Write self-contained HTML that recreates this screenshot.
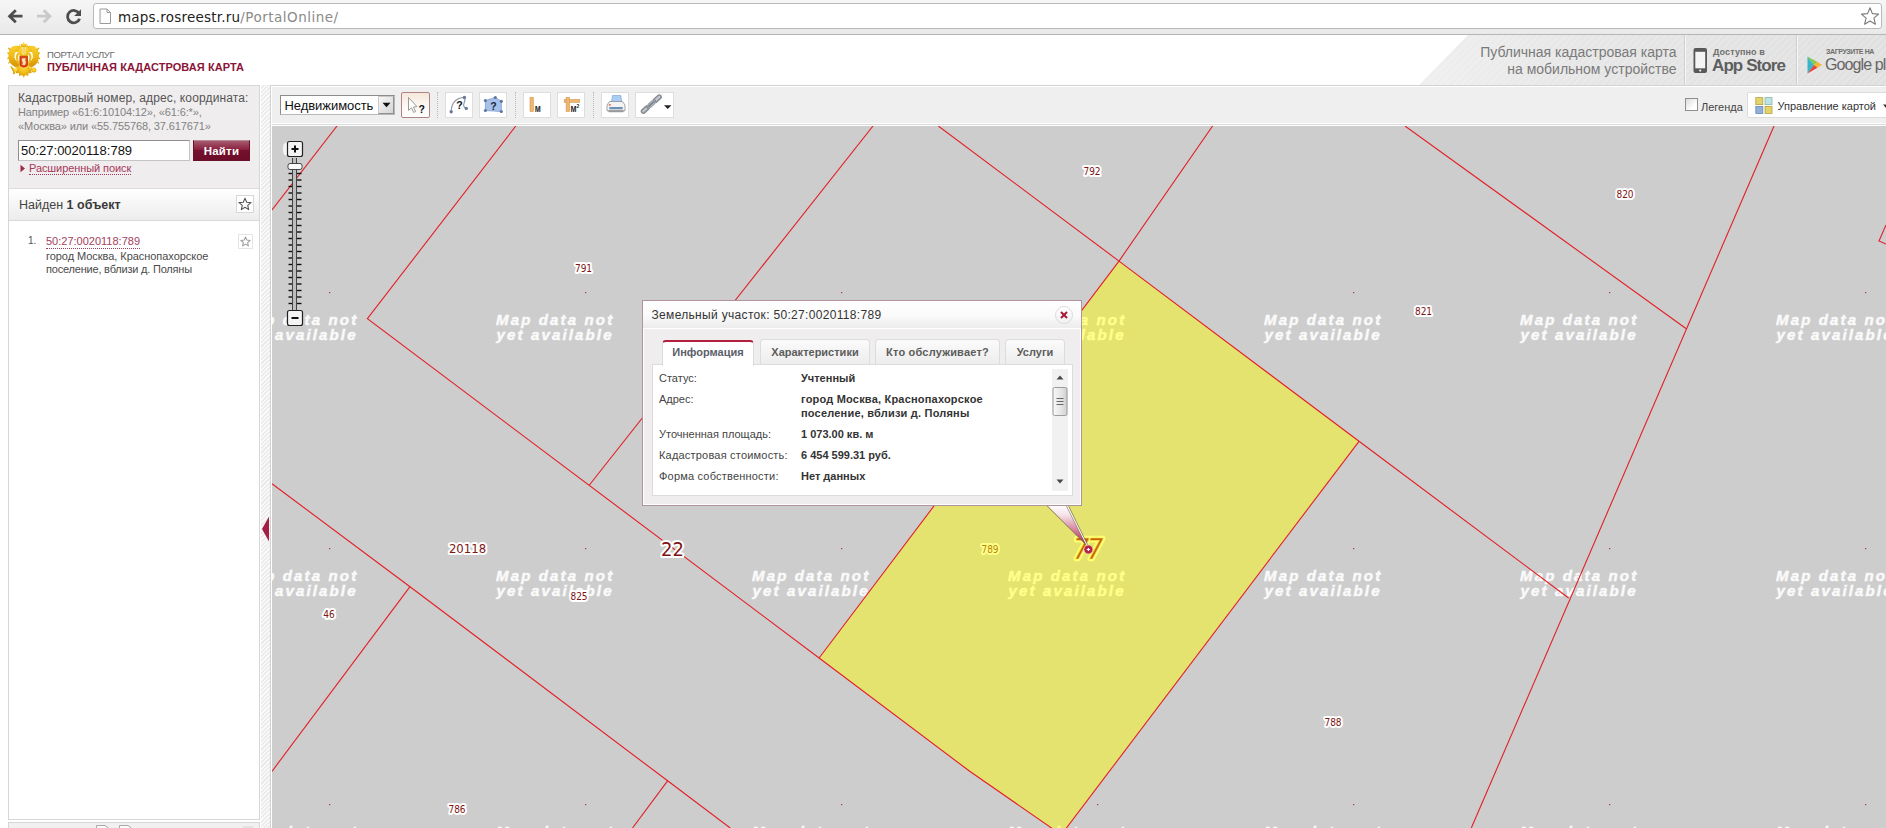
<!DOCTYPE html>
<html lang="ru">
<head>
<meta charset="utf-8">
<title>Публичная кадастровая карта</title>
<style>
html,body{margin:0;padding:0;}
body{width:1886px;height:828px;overflow:hidden;background:#fff;position:relative;font-family:"Liberation Sans",sans-serif;color:#444;}
.abs{position:absolute;}
.t{position:absolute;white-space:nowrap;line-height:1;}
/* browser chrome */
#chrome{left:0;top:0;width:1886px;height:34px;background:linear-gradient(#f6f6f6,#e9e9e9);border-bottom:1px solid #b5b5b5;}
#urlbox{left:93px;top:3px;width:1789px;height:26px;background:#fff;border:1px solid #b9b9b9;border-radius:3px;box-sizing:border-box;}
/* sidebar */
#side{left:8px;top:85px;width:252px;height:735px;border:1px solid #d6d6d6;box-sizing:border-box;background:#fff;}
#search{left:0;top:0;width:250px;height:102px;background:#efeded;border-bottom:1px solid #dcdcdc;}
#found{left:0;top:103px;width:250px;height:31px;background:linear-gradient(#ffffff,#ececec);border-bottom:1px solid #d9d9d9;}
/* map */
#mapframe{left:270px;top:85px;width:1620px;height:750px;border:1px solid #d2d2d2;box-sizing:border-box;background:#fff;}
#tbar{left:272px;top:87px;width:1614px;height:36px;background:#efefef;}
#map{left:272px;top:126px;width:1614px;height:702px;background:#cdcdcd;overflow:hidden;}
.tb{position:absolute;top:92px;width:28px;height:26px;box-sizing:border-box;border:1px solid #dedede;background:#fff;}
.sep{position:absolute;top:92px;height:26px;width:0;border-left:1px dotted #bbb;}
.wm{font:italic bold 15px "Liberation Sans",sans-serif;fill:#fafafa;stroke:#fafafa;stroke-width:.5px;letter-spacing:2.15px;}
.lb{font:10px "DejaVu Sans Condensed","Liberation Sans",sans-serif;fill:#7e1515;stroke:#fff;stroke-width:4px;paint-order:stroke;stroke-linejoin:round;}
/* popup */
#popup{left:642px;top:300px;width:440px;height:206px;box-sizing:border-box;border:1px solid #b3939b;background:#efeded;box-shadow:inset 0 0 0 1px #fff;}
.tab{position:absolute;top:38px;height:26px;box-sizing:border-box;border:1px solid #dcdcdc;border-bottom:none;border-radius:4px 4px 0 0;background:linear-gradient(#fbfbfb,#ececec);font-weight:bold;font-size:11px;color:#5c5c5c;text-align:center;line-height:25px;}
.row{position:absolute;left:6px;font-size:11px;color:#444;white-space:nowrap;line-height:14px;}
.val{position:absolute;left:148px;font-size:11px;font-weight:bold;color:#333;white-space:nowrap;line-height:14px;}
</style>
</head>
<body>
<!-- CHROME -->
<div id="chrome" class="abs"></div>
<div id="urlbox" class="abs"></div>
<svg class="abs" style="left:0;top:0" width="120" height="34" viewBox="0 0 120 34">
  <g fill="none" stroke-linecap="butt" stroke-linejoin="miter">
    <path d="M22.5 16.2H10.5M15.8 10.2L9.6 16.2L15.8 22.2" stroke="#4d4d4d" stroke-width="2.8"/>
    <path d="M37 16.2H49M43.7 10.2L49.9 16.2L43.7 22.2" stroke="#c9c9c9" stroke-width="2.8"/>
    <path d="M79.2 13.6A6.2 6.2 0 1 0 79.6 18.8" stroke="#4d4d4d" stroke-width="2.8"/>
  </g>
  <path d="M81 9.2V16H74.2Z" fill="#4d4d4d"/>
  <path d="M100 9H107L110.5 12.5V23.5H100Z" fill="#fdfdfd" stroke="#9a9a9a" stroke-width="1"/>
  <path d="M107 9V12.5H110.5" fill="none" stroke="#9a9a9a" stroke-width="1"/>
</svg>
<div class="t" style="left:118px;top:8.5px;font:13.5px 'DejaVu Sans','Liberation Sans',sans-serif;letter-spacing:.2px;color:#222;line-height:17px;">maps.rosreestr.ru<span style="color:#8a8a8a;letter-spacing:.5px">/PortalOnline/</span></div>
<svg class="abs" style="left:1860px;top:6px" width="20" height="20" viewBox="0 0 20 20"><path d="M10 1.8L12.4 7.6L18.6 8.1L13.9 12.1L15.4 18.2L10 14.9L4.6 18.2L6.1 12.1L1.4 8.1L7.6 7.6Z" fill="#fff" stroke="#7c7c7c" stroke-width="1.15" stroke-linejoin="round"/></svg>
<!-- HEADER -->
<div id="header" class="abs" style="left:0;top:35px;width:1886px;height:50px;">
<svg class="abs" style="left:6px;top:5px" width="36" height="40" viewBox="0 0 36 40">
  <defs>
    <radialGradient id="gold" cx="50%" cy="40%" r="65%"><stop offset="0" stop-color="#ffe055"/><stop offset=".55" stop-color="#f3c01a"/><stop offset="1" stop-color="#cf9408"/></radialGradient>
    <linearGradient id="goldw" x1="0" y1="0" x2="0" y2="1"><stop offset="0" stop-color="#f6cb2a"/><stop offset=".5" stop-color="#f0b912"/><stop offset="1" stop-color="#d99c0a"/></linearGradient>
  </defs>
  <!-- wings (outer + inner feather arcs) -->
  <g fill="none" stroke-linecap="round">
    <path d="M11.500 9C7 7.800 5 12 5.500 17.500C5.900 20.800 7.500 23 10.300 24.200" stroke="url(#goldw)" stroke-width="6.200"/>
    <path d="M23.900 9C28.400 7.800 30.400 12 29.900 17.500C29.500 20.800 27.900 23 25.100 24.200" stroke="url(#goldw)" stroke-width="6.200"/>
    <path d="M12.400 13.600C10.900 15 10.900 18.500 11.600 20.800C12 22 12.600 22.900 13.400 23.500" stroke="#eebb1c" stroke-width="2.200"/>
    <path d="M23 13.600C24.500 15 24.500 18.500 23.800 20.800C23.400 22 22.800 22.900 22 23.500" stroke="#eebb1c" stroke-width="2.200"/>
    <path d="M4 9.500L2.600 8.200M2.800 13.500L1.800 13M2.600 18L1.800 18.500M3.600 22L2.800 23M31.400 9.500L32.800 8.200M32.600 13.500L33.600 13M32.800 18L33.600 18.500M31.800 22L32.600 23" stroke="#e0a50d" stroke-width="1.200"/>
  </g>
  <g fill="url(#gold)">
    <!-- central crown -->
    <path d="M17.700 1.800L19 4.200L20.800 3.600L20.200 7H15.200L14.600 3.600L16.400 4.200Z"/>
    <!-- heads with small crowns -->
    <path d="M11.600 5.200L12.800 6.600L13.800 4.800L14.800 6.600L16 5.200L15.800 8.600C16.600 10 16.400 12 15.600 13.400L17.700 15L19.800 13.400C19 12 18.800 10 19.600 8.600L19.400 5.200L20.600 6.600L21.600 4.800L22.600 6.600L23.800 5.200L23.600 8.400L26.600 10.200L23.400 11.200L22 13.600L21.600 17H13.800L13.400 13.600L12 11.200L8.800 10.200L11.800 8.400Z"/>
    <!-- body + tail -->
    <path d="M13.600 16H21.800L22.400 26.500L24.800 29L25.600 33.200L22.600 33L22.200 36L19.300 35L17.700 37.500L16.100 35L13.200 36L12.800 33L9.800 33.200L10.600 29L13 26.500Z"/>
    <!-- legs -->
    <path d="M12.600 25.500L8.400 28.800L6.600 27.200L5.600 28.600L7.400 31.400L6.800 34.400L8.600 33.800L10.200 31L13.400 28.800Z"/>
    <path d="M22.800 25.500L26.200 27.800L25.400 30.400L22 28.800Z"/>
    <circle cx="27.900" cy="30" r="2.500"/>
  </g>
  <path d="M4.800 26.200L8.600 33.500" stroke="#dba20e" stroke-width="1.100"/>
  <rect x="16.300" y="6.500" width="2.900" height="8" fill="#f3c62c" opacity=".75"/>
  <!-- shield -->
  <path d="M13.700 16.300H21.800V24.500C21.800 26 20 27.200 17.750 27.500C15.500 27.200 13.700 26 13.700 24.500Z" fill="#c32418"/>
  <path d="M14.700 17.300H20.800V24.200C20.800 25.300 19.400 26.200 17.750 26.500C16.100 26.200 14.700 25.300 14.700 24.200Z" fill="#e4551c"/>
  <path d="M16 18.400L19.600 18.200L19.200 20.400L20 22.600L18.800 25L16.200 24.800L17 22.400L15.800 20.600Z" fill="#ffe3b3"/>
</svg>
<div class="t" style="left:47px;top:15px;font-size:9.500px;color:#6b6b6b;line-height:10px;letter-spacing:-.3px;">ПОРТАЛ УСЛУГ</div>
<div class="t" style="left:47px;top:26px;font-size:11px;font-weight:bold;color:#8b1538;line-height:12px;letter-spacing:.06px;">ПУБЛИЧНАЯ КАДАСТРОВАЯ КАРТА</div>
<!-- mobile banner -->
<svg class="abs" style="left:1410px;top:0" width="476" height="50" viewBox="0 0 476 50">
  <defs>
    <linearGradient id="bn" x1="0" x2="1" y1="0" y2="0"><stop offset="0" stop-color="#efefef"/><stop offset=".35" stop-color="#e6e6e6"/><stop offset="1" stop-color="#e0e0e0"/></linearGradient>
    <pattern id="stripe" width="5" height="5" patternUnits="userSpaceOnUse" patternTransform="rotate(-45)"><rect width="5" height="2" fill="#fff" opacity=".15"/></pattern>
  </defs>
  <path d="M58 0H476V50H9Z" fill="url(#bn)"/>
  <path d="M58 0H476V50H9Z" fill="url(#stripe)"/>
  <path d="M274.500 0V50M386.500 0V50" stroke="#cfcfcf" stroke-width="1"/>
  <path d="M275.500 0V50M387.500 0V50" stroke="#f6f6f6" stroke-width="1"/>
  <!-- phone -->
  <rect x="283.500" y="13" width="13.500" height="25" rx="2" fill="#585858"/>
  <rect x="285.300" y="16.800" width="9.900" height="16.500" fill="#f4f4f4"/>
  <circle cx="290.200" cy="35.600" r="1.100" fill="#eee"/>
  <!-- play icon -->
  <path d="M397.500 21.500L404 30L397.500 38.500Z" fill="#37b6c9"/>
  <path d="M397.500 21.500L407.500 27L404 30Z" fill="#8cc84b"/>
  <path d="M407.500 27L412 29.800L407.500 32.800L404 30Z" fill="#f7b531"/>
  <path d="M404 30L407.500 32.800L397.500 38.500Z" fill="#e8443a"/>
</svg>
<div class="t" style="left:1380px;width:296.500px;text-align:right;top:9px;font-size:14px;color:#7a7a7a;line-height:17px;">Публичная кадастровая карта<br>на мобильном устройстве</div>
<div class="t" style="left:1713px;top:12px;font-size:9px;font-weight:bold;color:#6e6e6e;line-height:10px;letter-spacing:.1px;">Доступно в</div>
<div class="t" style="left:1712px;top:20.500px;font-size:17px;font-weight:bold;color:#5e5e5e;line-height:20px;letter-spacing:-.9px;">App Store</div>
<div class="t" style="left:1826px;top:11.500px;font-size:7px;font-weight:bold;color:#6e6e6e;line-height:9px;letter-spacing:-.4px;">ЗАГРУЗИТЕ НА</div>
<div class="t" style="left:1825px;top:19.500px;font-size:16px;color:#666;line-height:20px;letter-spacing:-.9px;">Google play</div>
</div>
<!-- SIDEBAR -->
<div id="side" class="abs">
 <div id="search" class="abs">
  <div class="t" style="left:9px;top:5px;font-size:12px;line-height:15px;color:#555;letter-spacing:.13px;">Кадастровый номер, адрес, координата:</div>
  <div class="t" style="left:9px;top:19px;font-size:11px;line-height:14px;color:#828282;letter-spacing:-.12px;">Например «61:6:10104:12», «61:6:*»,<br>«Москва» или «55.755768, 37.617671»</div>
  <div class="abs" style="left:9px;top:54px;width:172px;height:21px;box-sizing:border-box;border:1px solid #8f8f8f;border-right-color:#c4c4c4;border-bottom-color:#c4c4c4;background:#fff;"></div>
  <div class="t" style="left:12px;top:57px;font-size:13px;line-height:15px;color:#111;">50:27:0020118:789</div>
  <div class="abs" style="left:184px;top:54px;width:57px;height:21px;box-sizing:border-box;background:linear-gradient(#a65a6e 0,#8a2140 45%,#74102e 50%,#6c0d2a 100%);border:1px solid #6a1029;border-top-color:#b98a97;"></div>
  <div class="t" style="left:184px;top:59px;width:57px;text-align:center;font-size:11.500px;font-weight:bold;line-height:13px;color:#fff;letter-spacing:.2px;">Найти</div>
  <svg class="abs" style="left:11px;top:78px" width="6" height="9" viewBox="0 0 6 9"><path d="M.5 .8L5 4.500L.5 8.200Z" fill="#a02848"/></svg>
  <div class="t" style="left:20px;top:75px;font-size:11px;line-height:14px;color:#a8365a;border-bottom:1px dotted #a8365a;height:13px;letter-spacing:-.08px;">Расширенный поиск</div>
 </div>
 <div id="found" class="abs">
  <div class="t" style="left:10px;top:9px;font-size:12.500px;line-height:15px;color:#444;">Найден <b style="color:#3a3a3a">1 объект</b></div>
  <div class="abs" style="left:227px;top:6px;width:18px;height:18px;box-sizing:border-box;border:1px solid #d8d8d8;background:#fff;"></div>
  <svg class="abs" style="left:229px;top:8px" width="14" height="14" viewBox="0 0 14 14"><path d="M7 1.200L8.700 5.200L13 5.600L9.700 8.400L10.700 12.600L7 10.300L3.300 12.600L4.300 8.400L1 5.600L5.300 5.200Z" fill="#fff" stroke="#555" stroke-width="1.100" stroke-linejoin="round"/></svg>
 </div>
 <div class="t" style="left:19px;top:149px;font-size:10px;line-height:12px;color:#555;">1.</div>
 <div class="t" style="left:37px;top:148px;font-size:11px;line-height:14px;color:#a3405c;border-bottom:1px dotted #a3405c;height:14px;">50:27:0020118:789</div>
 <div class="t" style="left:37px;top:164px;font-size:11px;line-height:13px;color:#4a4a4a;letter-spacing:-.05px;">город Москва, Краснопахорское<br><span style="letter-spacing:-.2px">поселение, вблизи д. Поляны</span></div>
 <div class="abs" style="left:229px;top:148px;width:15px;height:15px;box-sizing:border-box;border:1px solid #e4e4e4;background:#fff;"></div>
 <svg class="abs" style="left:231px;top:150px" width="11" height="11" viewBox="0 0 14 14"><path d="M7 1.200L8.700 5.200L13 5.600L9.700 8.400L10.700 12.600L7 10.300L3.300 12.600L4.300 8.400L1 5.600L5.300 5.200Z" fill="#fff" stroke="#9a9a9a" stroke-width="1.300" stroke-linejoin="round"/></svg>
</div>
<!-- bottom panel under sidebar -->
<div class="abs" style="left:8px;top:822px;width:252px;height:10px;box-sizing:border-box;border:1px solid #d6d6d6;background:#f1f1f1;"></div>
<svg class="abs" style="left:90px;top:823px" width="170" height="5" viewBox="90 823 170 5"><g fill="#fbfbfb" stroke="#a9a9a9" stroke-width="1"><path d="M96.500 830V825.500H105L108.500 828V830"/><path d="M119.500 830V825.500H128L131.500 828V830"/></g><rect x="243" y="826" width="10" height="3" fill="#e3e3e3"/></svg>
<!-- splitter -->
<div class="abs" style="left:261px;top:85px;width:9px;height:743px;background:repeating-linear-gradient(135deg,#f9f9f9 0,#f9f9f9 1.500px,#ebebeb 1.500px,#ebebeb 3px);"></div>
<svg class="abs" style="left:261px;top:516px" width="9" height="26" viewBox="0 0 9 26"><path d="M8 0.500V25.500L1 13Z" fill="#a51e46"/></svg>
<!-- MAP -->
<div id="mapframe" class="abs"></div>
<div id="tbar" class="abs"></div>
<div class="abs" style="left:272px;top:124px;width:1614px;height:1px;background:#dadada;"></div>
<!-- select -->
<div class="abs" style="left:280px;top:95px;width:115px;height:20px;box-sizing:border-box;border:1px solid #8c8c8c;border-right-color:#b9b9b9;border-bottom-color:#b9b9b9;background:#fff;"></div>
<div class="t" style="left:284.500px;top:98px;font-size:13px;line-height:15px;color:#111;letter-spacing:-.05px;">Недвижимость</div>
<div class="abs" style="left:378px;top:96px;width:16px;height:18px;box-sizing:border-box;border:1px solid #8e8e8e;border-left-color:#c9c9c9;border-top-color:#c9c9c9;background:linear-gradient(135deg,#f7f7f7,#d5d5d5);"></div>
<svg class="abs" style="left:382px;top:102px" width="9" height="6" viewBox="0 0 9 6"><path d="M.5 .8H8.500L4.500 5.300Z" fill="#111"/></svg>
<!-- tool buttons -->
<div class="tb" style="left:401px;width:29px;border-color:#b08484;border-radius:2px;background:linear-gradient(#f6e7da,#fdfaf7 60%,#fff);"></div>
<div class="sep" style="left:437px;"></div>
<div class="tb" style="left:445px;"></div>
<div class="tb" style="left:479px;"></div>
<div class="sep" style="left:515px;"></div>
<div class="tb" style="left:523px;"></div>
<div class="tb" style="left:557px;"></div>
<div class="sep" style="left:593px;"></div>
<div class="tb" style="left:601px;"></div>
<div class="tb" style="left:635px;width:39px;"></div>
<svg class="abs" style="left:396px;top:86px;" width="290" height="38" viewBox="396 86 290 38">
  <!-- cursor ? -->
  <path d="M408.500 97.500V110.500L411.500 107.800L413.700 112.400L415.600 111.500L413.500 107L417 106.600Z" fill="#fff" stroke="#9a9a9a" stroke-width="1" stroke-linejoin="round"/>
  <text x="418.400" y="112.700" font-family="Liberation Sans, sans-serif" font-weight="bold" font-size="10.500" fill="#111">?</text>
  <!-- curve ? -->
  <path d="M451.200 111.800C451.500 102 456 97.800 464.400 97.500C467 102 460 105 466.300 108.400" fill="none" stroke="#8d97ab" stroke-width="1.200"/>
  <g fill="#6c7a96"><circle cx="451.200" cy="111.800" r="1.700"/><circle cx="464.400" cy="97.500" r="1.700"/><circle cx="466.300" cy="108.400" r="1.700"/></g>
  <text x="456.200" y="108.800" font-family="Liberation Sans, sans-serif" font-weight="bold" font-size="10.500" fill="#111">?</text>
  <!-- polygon ? -->
  <path d="M485.400 100.600L495.300 97.500L501.300 101.300V111.500L485.400 110.500Z" fill="#a5c1ec" stroke="#7d9cd0" stroke-width=".8"/>
  <g fill="#61779f"><circle cx="485.400" cy="100.600" r="1.600"/><circle cx="495.300" cy="97.500" r="1.600"/><circle cx="501.300" cy="101.300" r="1.600"/><circle cx="501.300" cy="111.500" r="1.600"/><circle cx="485.400" cy="110.500" r="1.600"/></g>
  <text x="490.300" y="109.600" font-family="Liberation Sans, sans-serif" font-weight="bold" font-size="10.500" fill="#1a2535">?</text>
  <!-- ruler m -->
  <rect x="530" y="97.300" width="3.400" height="14.300" fill="#eeb673" stroke="#d89a52" stroke-width=".6"/>
  <text transform="translate(534.800 111.700) scale(.78 1)" font-family="Liberation Sans, sans-serif" font-weight="bold" font-size="10.500" fill="#2a2a2a">м</text>
  <!-- ruler m2 -->
  <rect x="564.200" y="99.400" width="15.500" height="3" fill="#eeb673" stroke="#d89a52" stroke-width=".6"/>
  <rect x="566.100" y="97.300" width="3.500" height="14.300" fill="#eeb673" stroke="#d89a52" stroke-width=".6"/>
  <text transform="translate(570.400 111.700) scale(.78 1)" font-family="Liberation Sans, sans-serif" font-weight="bold" font-size="10.500" fill="#2a2a2a">м</text>
  <text x="576.600" y="108" font-family="Liberation Sans, sans-serif" font-weight="bold" font-size="5" fill="#2a2a2a">2</text>
  <!-- printer -->
  <path d="M612.500 95.500H620.800L621.800 102H611.500Z" fill="#a9cdf3" stroke="#7fa6d6" stroke-width=".7"/>
  <path d="M609.500 101.500H622.500L625 105V110.800H607V105Z" fill="#f3f3f3" stroke="#8d8d8d" stroke-width=".8"/>
  <rect x="609.300" y="107" width="13.400" height="2.300" fill="#6f8fb5"/>
  <rect x="608.300" y="110.300" width="15.400" height="2" rx=".8" fill="#9a9a9a"/>
  <rect x="608.800" y="104.300" width="2" height="1.200" fill="#e0442f"/>
  <!-- chain -->
  <g fill="#c3c8cd" stroke="#868d94" stroke-width="1.500">
    <rect x="-4.500" y="-1.900" width="9" height="3.800" rx="1.900" transform="translate(645.300 109.500) rotate(-42)"/>
    <rect x="-4.500" y="-1.900" width="9" height="3.800" rx="1.900" transform="translate(657.300 98.700) rotate(-42)"/>
  </g>
  <path d="M647.500 107.500L655 100.700" stroke="#7c838a" stroke-width="2.200" stroke-linecap="round"/>
  <g fill="none" stroke="#9aa1a8" stroke-width="1.400">
    <rect x="-4.300" y="-1.800" width="8.600" height="3.600" rx="1.800" transform="translate(651.300 104.100) rotate(-42)"/>
  </g>
  <path d="M664 105.200H671.400L667.700 109Z" fill="#222"/>
</svg>
<!-- legend + manage -->
<div class="abs" style="left:1685px;top:98px;width:13px;height:13px;box-sizing:border-box;border:1px solid #8e8e8e;background:linear-gradient(135deg,#dcdcdc,#fff 70%);"></div>
<div class="t" style="left:1701px;top:100.500px;font-size:11px;line-height:13px;color:#444;">Легенда</div>
<div class="abs" style="left:1747px;top:92px;width:150px;height:26px;box-sizing:border-box;border:1px solid #dcdcdc;border-radius:2px;background:#fff;"></div>
<svg class="abs" style="left:1755px;top:97px" width="18" height="17" viewBox="0 0 18 17">
  <rect x=".8" y=".6" width="7" height="7" fill="#e3d36b" stroke="#b5a33a" stroke-width=".8"/>
  <rect x="10" y=".6" width="7" height="7" fill="#bfe3e0" stroke="#86b6b0" stroke-width=".8"/>
  <rect x=".8" y="9.400" width="7" height="7" fill="#8fb0d8" stroke="#6789b5" stroke-width=".8"/>
  <rect x="10" y="9.400" width="7" height="7" fill="#e3d36b" stroke="#b5a33a" stroke-width=".8"/>
</svg>
<div class="t" style="left:1777.500px;top:99.500px;font-size:11px;line-height:13px;color:#333;">Управление картой</div>
<svg class="abs" style="left:1883px;top:104px" width="8" height="5" viewBox="0 0 8 5"><path d="M0 .5H7L3.500 4.500Z" fill="#333"/></svg>
<div id="map" class="abs">
<svg class="abs" style="left:0;top:0" width="1614" height="702" viewBox="272 126 1614 702">
  <defs>
    <clipPath id="ycl"><path d="M1119 261.100L1359 441.300L1061.300 834.800L970.400 771.800L819.100 658Z"/></clipPath>
  </defs>
  <g class="wm">
<text x="240" y="324.5">Map data not</text><text x="240.5" y="340">yet available</text>
<text x="496" y="324.5">Map data not</text><text x="496.5" y="340">yet available</text>
<text x="752" y="324.5">Map data not</text><text x="752.5" y="340">yet available</text>
<text x="1008" y="324.5">Map data not</text><text x="1008.5" y="340">yet available</text>
<text x="1264" y="324.5">Map data not</text><text x="1264.5" y="340">yet available</text>
<text x="1520" y="324.5">Map data not</text><text x="1520.5" y="340">yet available</text>
<text x="1776" y="324.5">Map data not</text><text x="1776.5" y="340">yet available</text>
<text x="240" y="580.5">Map data not</text><text x="240.5" y="596">yet available</text>
<text x="496" y="580.5">Map data not</text><text x="496.5" y="596">yet available</text>
<text x="752" y="580.5">Map data not</text><text x="752.5" y="596">yet available</text>
<text x="1008" y="580.5">Map data not</text><text x="1008.5" y="596">yet available</text>
<text x="1264" y="580.5">Map data not</text><text x="1264.5" y="596">yet available</text>
<text x="1520" y="580.5">Map data not</text><text x="1520.5" y="596">yet available</text>
<text x="1776" y="580.5">Map data not</text><text x="1776.5" y="596">yet available</text>
<text x="240" y="836.5">Map data not</text><text x="240.5" y="852">yet available</text>
<text x="496" y="836.5">Map data not</text><text x="496.5" y="852">yet available</text>
<text x="752" y="836.5">Map data not</text><text x="752.5" y="852">yet available</text>
<text x="1008" y="836.5">Map data not</text><text x="1008.5" y="852">yet available</text>
<text x="1264" y="836.5">Map data not</text><text x="1264.5" y="852">yet available</text>
<text x="1520" y="836.5">Map data not</text><text x="1520.5" y="852">yet available</text>
<text x="1776" y="836.5">Map data not</text><text x="1776.5" y="852">yet available</text>
  </g>
  <g fill="#c43030"><rect x="329" y="292" width="1.2" height="1.2"/><rect x="585" y="292" width="1.2" height="1.2"/><rect x="841" y="292" width="1.2" height="1.2"/><rect x="1097" y="292" width="1.2" height="1.2"/><rect x="1353" y="292" width="1.2" height="1.2"/><rect x="1609" y="292" width="1.2" height="1.2"/><rect x="1865" y="292" width="1.2" height="1.2"/><rect x="329" y="548" width="1.2" height="1.2"/><rect x="585" y="548" width="1.2" height="1.2"/><rect x="841" y="548" width="1.2" height="1.2"/><rect x="1097" y="548" width="1.2" height="1.2"/><rect x="1353" y="548" width="1.2" height="1.2"/><rect x="1609" y="548" width="1.2" height="1.2"/><rect x="1865" y="548" width="1.2" height="1.2"/><rect x="329" y="804" width="1.2" height="1.2"/><rect x="585" y="804" width="1.2" height="1.2"/><rect x="841" y="804" width="1.2" height="1.2"/><rect x="1097" y="804" width="1.2" height="1.2"/><rect x="1353" y="804" width="1.2" height="1.2"/><rect x="1609" y="804" width="1.2" height="1.2"/><rect x="1865" y="804" width="1.2" height="1.2"/></g>
  <!-- highlighted parcel -->
  <path d="M1119 261.100L1359 441.300L1061.300 834.800L970.400 771.800L819.100 658Z" fill="#e4e36f"/>
  <g class="wm" style="fill:#ffff8c;stroke:#ffff8c" clip-path="url(#ycl)">
<text x="240" y="324.5">Map data not</text><text x="240.5" y="340">yet available</text>
<text x="496" y="324.5">Map data not</text><text x="496.5" y="340">yet available</text>
<text x="752" y="324.5">Map data not</text><text x="752.5" y="340">yet available</text>
<text x="1008" y="324.5">Map data not</text><text x="1008.5" y="340">yet available</text>
<text x="1264" y="324.5">Map data not</text><text x="1264.5" y="340">yet available</text>
<text x="1520" y="324.5">Map data not</text><text x="1520.5" y="340">yet available</text>
<text x="1776" y="324.5">Map data not</text><text x="1776.5" y="340">yet available</text>
<text x="240" y="580.5">Map data not</text><text x="240.5" y="596">yet available</text>
<text x="496" y="580.5">Map data not</text><text x="496.5" y="596">yet available</text>
<text x="752" y="580.5">Map data not</text><text x="752.5" y="596">yet available</text>
<text x="1008" y="580.5">Map data not</text><text x="1008.5" y="596">yet available</text>
<text x="1264" y="580.5">Map data not</text><text x="1264.5" y="596">yet available</text>
<text x="1520" y="580.5">Map data not</text><text x="1520.5" y="596">yet available</text>
<text x="1776" y="580.5">Map data not</text><text x="1776.5" y="596">yet available</text>
<text x="240" y="836.5">Map data not</text><text x="240.5" y="852">yet available</text>
<text x="496" y="836.5">Map data not</text><text x="496.5" y="852">yet available</text>
<text x="752" y="836.5">Map data not</text><text x="752.5" y="852">yet available</text>
<text x="1008" y="836.5">Map data not</text><text x="1008.5" y="852">yet available</text>
<text x="1264" y="836.5">Map data not</text><text x="1264.5" y="852">yet available</text>
<text x="1520" y="836.5">Map data not</text><text x="1520.5" y="852">yet available</text>
<text x="1776" y="836.5">Map data not</text><text x="1776.5" y="852">yet available</text>
  </g>
  <!-- parcel lines -->
  <g fill="none" stroke="#e41e26" stroke-width="1.100">
    <path d="M337 126L272 210"/>
    <path d="M515.800 126L367.400 318.700L819.100 658L970.400 771.800L1061.300 834.800"/>
    <path d="M873 126L589.400 485"/>
    <path d="M938.300 126L1119 261.100L1359 441.300L1568.600 598"/>
    <path d="M1212.600 126L1119 261.100L819.100 658"/>
    <path d="M1359 441.300L1061.300 834.800"/>
    <path d="M1405 126L1686.300 328.800"/>
    <path d="M1774 126L1471.300 828"/>
    <path d="M272 483.800L410 586.700L667.600 780.800L730.200 828"/>
    <path d="M410 586.700L272 771.300"/>
    <path d="M667.600 780.800L632.500 828"/>
    <path d="M1886 225L1879 241L1886 244"/>
  </g>
  <!-- labels -->
  <g class="lb" text-anchor="middle">
    <text x="1092" y="175">792</text>
    <text x="1625" y="197.500">820</text>
    <text x="583.500" y="272">791</text>
    <text x="1423.500" y="315">821</text>
    <text x="579" y="600">825</text>
    <text x="329" y="618">46</text>
    <text x="1333" y="725.500">788</text>
    <text x="457" y="813">786</text>
    <text x="467.500" y="553" style="font-size:13px;">20118</text>
    <text x="672.500" y="555.500" style="font-size:20px;">22</text>
    <text x="990" y="553" style="fill:#b88600;stroke:#ffff8c;">789</text>
    <text x="1087.200" y="558.500" style="font-size:28px;font-style:italic;fill:#ffff70;stroke:#ffff70;stroke-width:4.400px;letter-spacing:-2px;">77</text>
    <text x="1087.200" y="558.500" style="font-size:28px;font-style:italic;fill:#c66400;stroke:#f2dc5a;stroke-width:.5px;paint-order:normal;letter-spacing:-2px;">77</text>
  </g>
  <!-- zoom slider -->
  <g>
    <ellipse cx="285.500" cy="149" rx="2.600" ry="6.500" fill="#f4f4f4"/>
    <path d="M292.500 158V310M296.500 158V310" stroke="#333" stroke-width="1"/>
    <path d="M294.500 158V310" stroke="#c9c9c9" stroke-width="3"/>
    <g stroke="#111" stroke-width="1.400"><path d="M288.500 173.5H301.500"/><path d="M288.500 180.0H301.500"/><path d="M288.500 186.5H301.500"/><path d="M288.500 193.0H301.500"/><path d="M288.500 199.5H301.500"/><path d="M288.500 206.0H301.500"/><path d="M288.500 212.5H301.500"/><path d="M288.500 219.0H301.500"/><path d="M288.500 225.5H301.500"/><path d="M288.500 232.0H301.500"/><path d="M288.500 238.5H301.500"/><path d="M288.500 245.0H301.500"/><path d="M288.500 251.5H301.500"/><path d="M288.500 258.0H301.500"/><path d="M288.500 264.5H301.500"/><path d="M288.500 271.0H301.500"/><path d="M288.500 277.5H301.500"/><path d="M288.500 284.0H301.500"/><path d="M288.500 290.5H301.500"/><path d="M288.500 297.0H301.500"/><path d="M288.500 303.5H301.500"/></g>
    <path d="M294.500 158V310" stroke="#bdbdbd" stroke-width="3"/>
    <path d="M292.500 158V310M296.500 158V310" stroke="#444" stroke-width="1"/>
    <rect x="287.500" y="141.500" width="15" height="15" rx="2" fill="#f4f4f4" stroke="#222" stroke-width="1.200"/>
    <path d="M291.500 149H298.500M295 145.500V152.500" stroke="#111" stroke-width="2"/>
    <rect x="288" y="163.500" width="14" height="6" rx="2" fill="#fafafa" stroke="#333" stroke-width=".9"/>
    <rect x="287.500" y="310.500" width="15" height="15" rx="2" fill="#f4f4f4" stroke="#222" stroke-width="1.200"/>
    <path d="M291.500 318H298.500" stroke="#111" stroke-width="2"/>
  </g>
</svg>
</div>
<!-- POPUP -->
<svg class="abs" style="left:1040px;top:500px" width="60" height="60" viewBox="1040 500 60 60">
  <defs><linearGradient id="ptr" x1="0" y1="0" x2="0" y2="1"><stop offset="0" stop-color="#ffffff"/><stop offset=".25" stop-color="#f6e3e9"/><stop offset="1" stop-color="#b3204a"/></linearGradient></defs>
  <path d="M1046.800 505L1066.200 505L1086.300 545Z" fill="url(#ptr)"/>
  <path d="M1046.800 505.500L1086.300 545" stroke="#6e5a60" stroke-width=".8"/>
  <path d="M1066.200 505.500L1086.300 545" stroke="#6e6468" stroke-width=".7"/>
  <path d="M1067.300 505.500L1087 545" stroke="#fff" stroke-width="1.100"/>
  <path d="M1068.300 505.500L1087.700 545" stroke="#6e6468" stroke-width=".7"/>
  <circle cx="1088.400" cy="549.500" r="4.500" fill="#b5224e" stroke="#f3e0a0" stroke-width=".7"/>
  <path d="M1086.800 549.500H1090M1088.400 547.900V551.100" stroke="#fff" stroke-width="1.200"/>
</svg>
<div id="popup" class="abs">
  <div class="abs" style="left:0;top:0;width:438px;height:27px;background:linear-gradient(#ffffff 0,#fafafa 55%,#ececec 100%);border-bottom:1px solid #fff;"></div>
  <div class="t" style="left:8.500px;top:7px;font-size:12px;line-height:15px;color:#333;letter-spacing:.32px;">Земельный участок: 50:27:0020118:789</div>
  <div class="abs" style="left:412px;top:5px;width:18px;height:18px;box-sizing:border-box;border:1px solid #dcdcdc;border-radius:9px;background:linear-gradient(#fff,#f1f1f1);"></div>
  <svg class="abs" style="left:417px;top:10px" width="8" height="8" viewBox="0 0 8 8"><path d="M1 1L7 7M7 1L1 7" stroke="#a81737" stroke-width="2"/></svg>
  <!-- tabs -->
  <div class="tab" style="left:19px;width:92px;background:#fff;border-top:2px solid #b3203f;border-color:#b3203f #dcdcdc #dcdcdc #dcdcdc;top:39px;height:26px;line-height:20px;z-index:2;color:#5a6068;">Информация</div>
  <div class="tab" style="left:117px;width:110px;">Характеристики</div>
  <div class="tab" style="left:232px;width:125px;letter-spacing:.2px;">Кто обслуживает?</div>
  <div class="tab" style="left:362px;width:60px;">Услуги</div>
  <!-- content -->
  <div class="abs" style="left:9px;top:63px;width:421px;height:132px;box-sizing:border-box;border:1px solid #dcdcdc;background:#fff;">
    <div class="row" style="top:6px;">Статус:</div><div class="val" style="top:6px;">Учтенный</div>
    <div class="row" style="top:27px;">Адрес:</div><div class="val" style="top:27px;letter-spacing:.2px;">город Москва, Краснопахорское<br>поселение, вблизи д. Поляны</div>
    <div class="row" style="top:62px;">Уточненная площадь:</div><div class="val" style="top:62px;">1 073.00 кв. м</div>
    <div class="row" style="top:83px;letter-spacing:.2px;">Кадастровая стоимость:</div><div class="val" style="top:83px;">6 454 599.31 руб.</div>
    <div class="row" style="top:104px;letter-spacing:.2px;">Форма собственности:</div><div class="val" style="top:104px;">Нет данных</div>
    <!-- scrollbar -->
    <div class="abs" style="left:399px;top:4px;width:16px;height:122px;background:#f1f1f1;"></div>
    <svg class="abs" style="left:399px;top:4px" width="16" height="121" viewBox="0 0 16 121">
      <path d="M4.500 10.500L8 6.500L11.500 10.500Z" fill="#4a4a4a"/>
      <path d="M4.500 110.500L8 114.500L11.500 110.500Z" fill="#4a4a4a"/>
      <defs><linearGradient id="th" x1="0" x2="1" y1="0" y2="0"><stop offset="0" stop-color="#f8f8f8"/><stop offset=".6" stop-color="#e4e4e4"/><stop offset="1" stop-color="#cfcfcf"/></linearGradient></defs>
      <rect x="1" y="18.500" width="14" height="28" rx="1.500" fill="url(#th)" stroke="#9c9c9c" stroke-width="1"/>
      <path d="M4.500 29.500H11.500M4.500 32.500H11.500M4.500 35.500H11.500" stroke="#666" stroke-width="1"/>
    </svg>
  </div>
</div>
</body>
</html>
